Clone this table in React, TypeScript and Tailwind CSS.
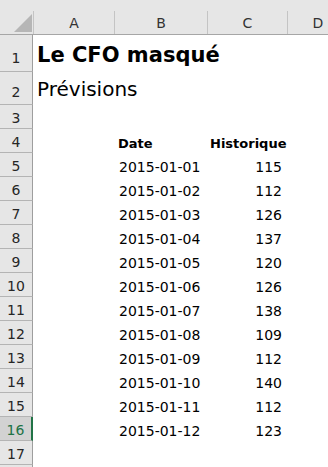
const font = { fontFamily: '"DejaVu Sans", sans-serif' };

const rows: [string, number][] = [
  ["2015-01-01", 115],
  ["2015-01-02", 112],
  ["2015-01-03", 126],
  ["2015-01-04", 137],
  ["2015-01-05", 120],
  ["2015-01-06", 126],
  ["2015-01-07", 138],
  ["2015-01-08", 109],
  ["2015-01-09", 112],
  ["2015-01-10", 140],
  ["2015-01-11", 112],
  ["2015-01-12", 123],
];

function RowHead({ n, h, pb, selected }: { n?: number; h: string; pb: string; selected?: boolean }) {
  return (
    <div
      className={`flex w-[33px] shrink-0 items-end justify-center border-b border-[#b4b4b4] text-[14px] leading-none ${h} ${pb} ${
        selected ? "border-r-[2px] border-r-[#217346] bg-[#d2d2d2] text-[#217346]" : "border-r border-r-[#9e9e9e] bg-[#e6e6e6] text-[#262626]"
      }`}
    >
      {n}
    </div>
  );
}

function ColHead({ label, w }: { label: string; w: string }) {
  return (
    <>
      <div className={`flex ${w} shrink-0 items-end justify-center pb-[4px] text-[14px] leading-none text-[#333]`}>{label}</div>
      <div className="h-[23px] w-px shrink-0 self-end bg-[#c4c4c4]" />
    </>
  );
}

export default function App() {
  return (
    <div className="h-[467px] w-[328px] overflow-hidden bg-white text-black" style={font}>
      <div className="flex h-[35px] border-b border-[#a6a6a6] bg-[#e6e6e6]">
        <div className="flex w-[33px] shrink-0 items-end justify-end pb-[2px] pr-[1px]">
          <svg width="18" height="18" viewBox="0 0 18 18">
            <polygon points="18,0 18,18 0,18" fill="#b6b6b6" />
          </svg>
        </div>
        <div className="h-[23px] w-px shrink-0 self-end bg-[#c4c4c4]" />
        <ColHead label="A" w="w-[80px]" />
        <ColHead label="B" w="w-[92px]" />
        <ColHead label="C" w="w-[79px]" />
        <ColHead label="D" w="w-[60px]" />
      </div>

      <div className="flex">
        <RowHead n={1} h="h-[37px]" pb="pb-[6px]" />
        <div className="flex items-end whitespace-nowrap pb-[6px] pl-[4px] text-[21px] font-bold leading-none">Le CFO masqué</div>
      </div>
      <div className="flex">
        <RowHead n={2} h="h-[33px]" pb="pb-[5px]" />
        <div className="flex items-end pb-[6px] pl-[4px] text-[20px] leading-none">Prévisions</div>
      </div>
      <div className="flex">
        <RowHead n={3} h="h-[24px]" pb="pb-[3px]" />
      </div>
      <div className="flex">
        <RowHead n={4} h="h-[24px]" pb="pb-[3px]" />
        <div className="w-[81px] shrink-0" />
        <div className="flex w-[93px] shrink-0 items-end pb-[3px] pl-[4px] text-[13px] font-bold leading-none">Date</div>
        <div className="flex w-[80px] shrink-0 items-end whitespace-nowrap pb-[3px] pl-[3px] text-[13px] font-bold leading-none">Historique</div>
      </div>
      {rows.map(([d, v], i) => (
        <div key={d} className="flex">
          <RowHead n={i + 5} h="h-[24px]" pb="pb-[3px]" selected={i + 5 === 16} />
          <div className="w-[81px] shrink-0" />
          <div className="flex w-[93px] shrink-0 items-end pb-[3px] pl-[5px] text-[14px] leading-none">{d}</div>
          <div className="flex w-[80px] shrink-0 items-end justify-end pb-[3px] pr-[5px] text-[14px] leading-none">{v}</div>
        </div>
      ))}
      <div className="flex">
        <RowHead n={17} h="h-[24px]" pb="pb-[3px]" />
      </div>
      <div className="flex">
        <RowHead h="h-[24px]" pb="pb-[3px]" />
      </div>
    </div>
  );
}
